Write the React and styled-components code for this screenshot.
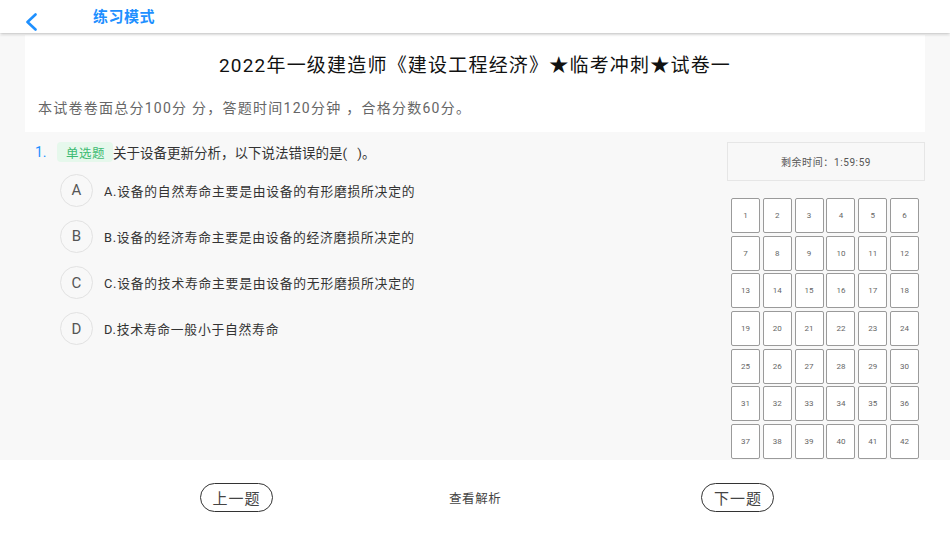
import React from 'react';
import styled, { createGlobalStyle } from 'styled-components';

const GlobalStyle = createGlobalStyle`
  html, body {
    margin: 0;
    padding: 0;
    background: #ffffff;
  }

  body {
    font-family: Roboto, "Noto Sans CJK SC", sans-serif;
    color: #333;
  }
`;

const Page = styled.div`
  display: flex;
  flex-direction: column;

  width: 950px;
  height: 534px;
  overflow: hidden;
`;

const Header = styled.header`
  position: relative;
  z-index: 1;

  display: flex;
  align-items: flex-start;
  gap: 55px;

  height: 33px;
  padding-left: 24px;

  background: #fff;
  box-shadow: 0 1px 3px rgba(0, 0, 0, 0.28);
`;

const Back = styled.svg`
  width: 14px;
  height: 18px;
  margin-top: 13px;
`;

const HeaderTitle = styled.h1`
  margin: 8px 0 0 0;

  font-size: 15px;
  font-weight: 700;
  line-height: 18px;
  color: #1e90ff;
  letter-spacing: 0.5px;
`;

const Main = styled.main`
  height: 425px;
  margin-top: 2px;
  overflow: hidden;

  background: #f8f8f8;
`;

const Card = styled.section`
  display: flex;
  flex-direction: column;

  height: 97px;
  margin: 0 25px;
  padding: 0 13px;

  background: #fff;
`;

const PaperTitle = styled.h2`
  margin: 19px 0 0 0;

  text-align: center;
  font-size: 19px;
  font-weight: 400;
  line-height: 24px;
  color: #111;
  letter-spacing: 1.2px;
`;

const PaperInfo = styled.p`
  margin: 21px 0 0 0;

  font-size: 14px;
  line-height: 18px;
  color: #666;
  letter-spacing: 1.25px;
`;

const Body = styled.div`
  display: flex;
  justify-content: space-between;

  padding: 10px 25px 0 35px;
`;

const Question = styled.div`
  display: flex;
  flex-direction: column;
`;

const Stem = styled.div`
  display: flex;
  align-items: center;

  height: 20px;

  font-size: 13.5px;
  color: #333;
`;

const Index = styled.span`
  width: 22px;

  font-size: 14px;
  color: #1e90ff;
`;

const Tag = styled.span`
  display: flex;
  align-items: center;

  height: 20px;
  padding: 0 8px 0 9px;
  border-radius: 4px;

  font-size: 12.5px;
  color: #3dbb72;
  letter-spacing: 0.5px;
  background: #e6f8ec;
`;

const Options = styled.ul`
  display: flex;
  flex-direction: column;
  gap: 14.3px;

  margin: 12px 0 0 25px;
  padding: 0;
  list-style: none;
`;

const Option = styled.li`
  display: flex;
  align-items: center;
  gap: 11px;

  height: 32px;
`;

const Letter = styled.span`
  display: flex;
  align-items: center;
  justify-content: center;

  width: 31px;
  height: 31px;
  border: 1px solid #e2e2e2;
  border-radius: 50%;

  font-size: 15px;
  color: #555;
`;

const OptionText = styled.span`
  font-size: 12.8px;
  color: #333;
  letter-spacing: 0.75px;
`;

const Side = styled.aside`
  display: flex;
  flex-direction: column;
  gap: 17px;

  width: 198px;
`;

const Timer = styled.div`
  display: flex;
  align-items: center;
  justify-content: center;

  height: 37px;
  border: 1px solid #e6e6e6;

  font-size: 10px;
  color: #555;
  letter-spacing: 0.6px;
`;

const Grid = styled.div`
  display: grid;
  grid-template-columns: repeat(6, 29px);
  grid-auto-rows: 35px;
  column-gap: 2.8px;
  row-gap: 2.67px;

  padding-left: 4px;
`;

const Cell = styled.div`
  display: flex;
  align-items: center;
  justify-content: center;

  border: 1px solid #9a9a9a;
  border-radius: 2px;

  font-size: 8px;
  color: #666;
  background: #fff;
`;

const Footer = styled.footer`
  display: flex;
  align-items: center;

  flex: 1;
  padding-left: 200px;

  background: #fff;
`;

const PillButton = styled.button`
  flex-shrink: 0;

  width: 73px;
  height: 29px;
  padding: 0;
  border: 1.3px solid #333;
  border-radius: 15px;

  font-family: inherit;
  font-size: 15px;
  color: #444;
  letter-spacing: 1px;
  background: #fff;
`;

const Analysis = styled.span`
  flex-shrink: 0;
  margin: 0 200px 0 176px;

  white-space: nowrap;
  font-size: 12.5px;
  color: #444;
  letter-spacing: 0.6px;
`;

const options = [
  ['A', 'A.设备的自然寿命主要是由设备的有形磨损所决定的'],
  ['B', 'B.设备的经济寿命主要是由设备的经济磨损所决定的'],
  ['C', 'C.设备的技术寿命主要是由设备的无形磨损所决定的'],
  ['D', 'D.技术寿命一般小于自然寿命'],
];

const numbers = Array.from({ length: 42 }, (_, i) => i + 1);

const App = () => {
  return (
    <Page>
      <GlobalStyle />
      <Header>
        <Back viewBox="0 0 14 18">
          <path
            d="M11.5 1.5 L3.5 9 L11.5 16.5"
            fill="none"
            stroke="#1e90ff"
            strokeWidth="2.6"
            strokeLinecap="round"
            strokeLinejoin="round"
          />
        </Back>
        <HeaderTitle>练习模式</HeaderTitle>
      </Header>

      <Main>
        <Card>
          <PaperTitle>2022年一级建造师《建设工程经济》★临考冲刺★试卷一</PaperTitle>
          <PaperInfo>本试卷卷面总分100分 分，答题时间120分钟 ，合格分数60分。</PaperInfo>
        </Card>

        <Body>
          <Question>
            <Stem>
              <Index>1.</Index>
              <Tag>单选题</Tag>
              关于设备更新分析，以下说法错误的是(&nbsp;&nbsp;&nbsp;)。
            </Stem>
            <Options>
              {options.map(([key, text]) => (
                <Option key={key}>
                  <Letter>{key}</Letter>
                  <OptionText>{text}</OptionText>
                </Option>
              ))}
            </Options>
          </Question>

          <Side>
            <Timer>剩余时间：1:59:59</Timer>
            <Grid>
              {numbers.map(n => (
                <Cell key={n}>{n}</Cell>
              ))}
            </Grid>
          </Side>
        </Body>
      </Main>

      <Footer>
        <PillButton>上一题</PillButton>
        <Analysis>查看解析</Analysis>
        <PillButton>下一题</PillButton>
      </Footer>
    </Page>
  );
};

export default App;
